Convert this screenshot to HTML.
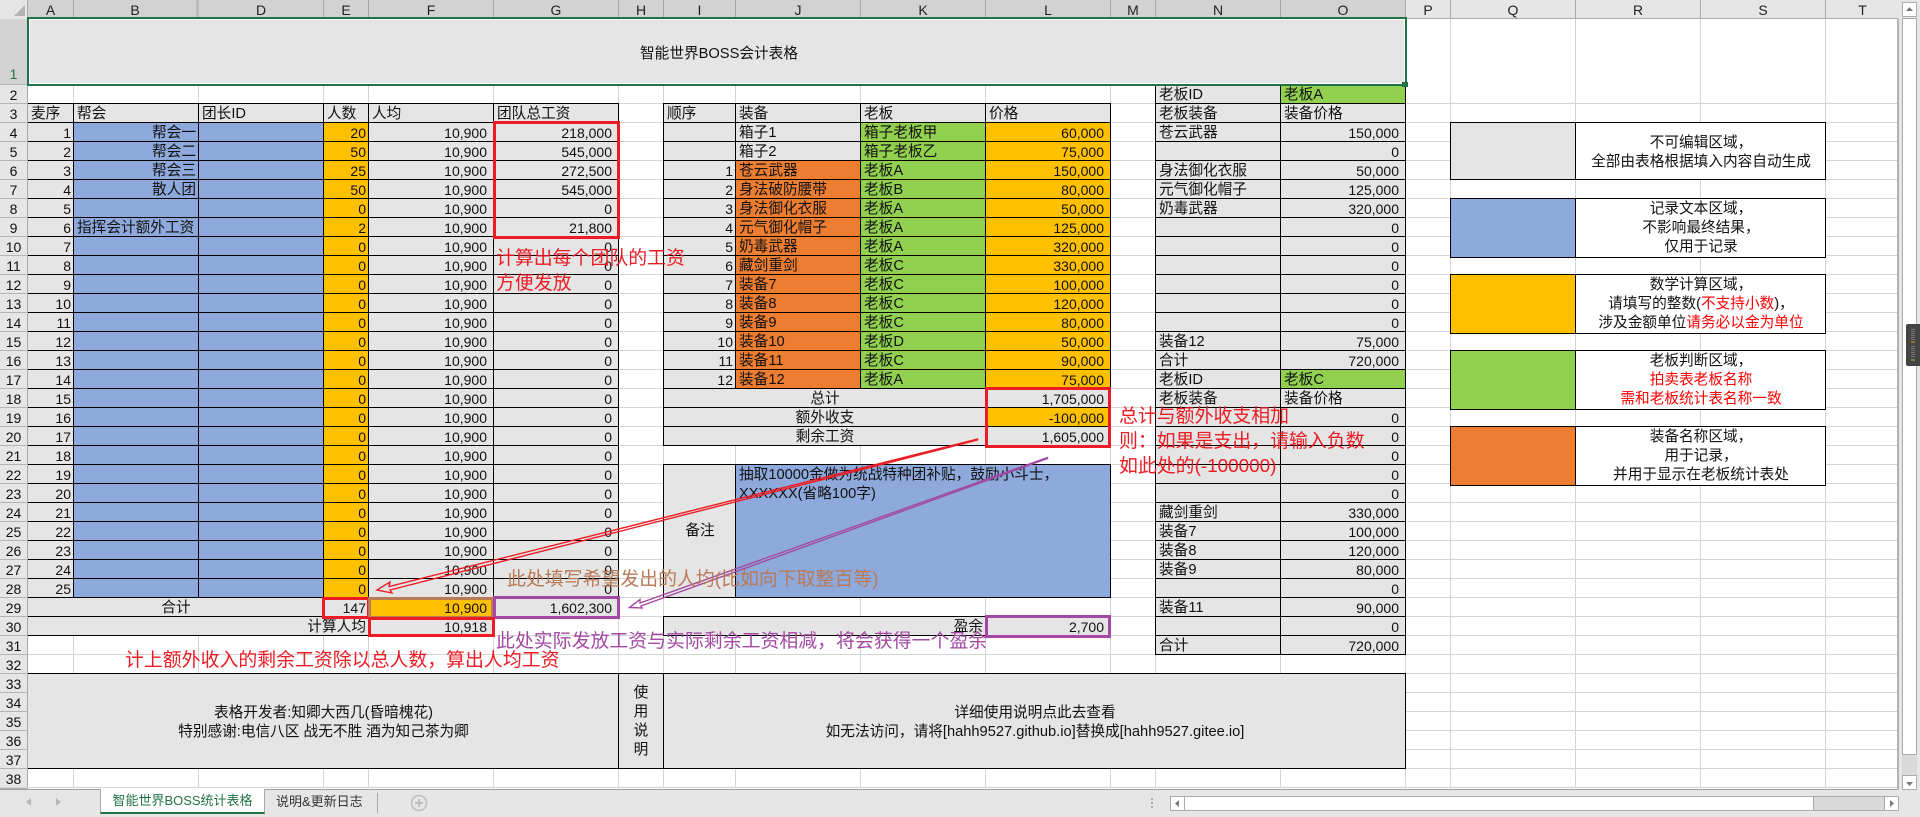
<!DOCTYPE html>
<html lang="zh-CN"><head><meta charset="utf-8"><title>智能世界BOSS会计表格</title>
<style>
html,body{margin:0;padding:0;width:1920px;height:817px;overflow:hidden;background:#fff}
body{position:relative;font:14.67px "Liberation Sans","Noto Sans CJK SC",sans-serif;color:#111}
.a{position:absolute}
table{position:absolute;border-collapse:separate;border-spacing:0;table-layout:fixed;border-top:1px solid #000;border-left:1px solid #000}
table.nl{border-left:0}
td{box-sizing:border-box;height:19px;padding:3px 2px 0 3px;line-height:15px;border-right:1px solid #000;border-bottom:1px solid #000;background:#e5e5e5;white-space:nowrap;overflow:hidden;text-align:left}
td.b{background:#8ea9db}td.y{background:#ffc000}td.e{background:#92d050}td.o{background:#ed7d31}td.w{background:#fff}
td.r{text-align:right}td.c{text-align:center}
td.n{text-align:right;font-size:14px;padding-right:6px}
td.m{text-align:right;font-size:14px}
td.x{background:none;border:0}
.red{color:#f00}
.ann{position:absolute;font-size:18.9px;line-height:25px;white-space:nowrap}
.box{position:absolute;box-sizing:border-box;border:3px solid #ed1c24}
#ch{position:absolute;left:0;top:0;width:1920px;height:19px;background:#e6e6e6}
#ch div{position:absolute;top:0;height:18px;line-height:20px;text-align:center;font-size:14px;box-sizing:border-box;border-right:1px solid #a8a8a8;color:#222;overflow:hidden}
#ch .s{background:#d2d2d2;border-bottom:0}
#rh{position:absolute;left:0;top:19px;width:28px}
#rh div{box-sizing:border-box;height:19px;line-height:21px;text-align:center;font-size:14px;background:#e6e6e6;border-bottom:1px solid #b4b4b4;border-right:1px solid #a8a8a8;color:#111}
</style></head><body>
<svg class="a" style="left:0;top:0" width="1920" height="817" shape-rendering="crispEdges"><path stroke="#d4d4d4" fill="none" d="M73.5 19V788M198.5 19V788M323.5 19V788M368.5 19V788M493.5 19V788M618.5 19V788M663.5 19V788M735.5 19V788M860.5 19V788M985.5 19V788M1110.5 19V788M1155.5 19V788M1280.5 19V788M1405.5 19V788M1450.5 19V788M1575.5 19V788M1700.5 19V788M1825.5 19V788"/></svg>
<div class="a" style="left:28px;top:85px;width:1870px;height:703px;background:repeating-linear-gradient(to bottom,transparent 0,transparent 18px,#d4d4d4 18px,#d4d4d4 19px)"></div>

<!-- column headers -->
<div id="ch">
<div style="left:0;width:28px"></div>
<div class="s" style="left:28px;width:46px">A</div><div class="s" style="left:74px;width:125px;border-right:3px solid #bdbdbd">B</div><div class="s" style="left:199px;width:125px">D</div><div class="s" style="left:324px;width:45px">E</div><div class="s" style="left:369px;width:125px">F</div><div class="s" style="left:494px;width:125px">G</div><div class="s" style="left:619px;width:45px">H</div><div class="s" style="left:664px;width:72px">I</div><div class="s" style="left:736px;width:125px">J</div><div class="s" style="left:861px;width:125px">K</div><div class="s" style="left:986px;width:125px">L</div><div class="s" style="left:1111px;width:45px">M</div><div class="s" style="left:1156px;width:125px">N</div><div class="s" style="left:1281px;width:125px">O</div>
<div style="left:1406px;width:45px">P</div><div style="left:1451px;width:125px">Q</div><div style="left:1576px;width:125px">R</div><div style="left:1701px;width:125px">S</div><div style="left:1826px;width:73px;border-right:0">T</div>
</div>
<div class="a" style="left:1406px;top:18px;width:492px;height:1px;background:#a8a8a8"></div>
<svg class="a" style="left:14px;top:5px" width="12" height="11"><path d="M11 0V11H0Z" fill="#b4b4b4"/></svg>

<!-- row headers -->
<div id="rh">
<div style="height:66px;line-height:110px;background:#d2d2d2;color:#217346">1</div>
<div>2</div><div>3</div><div>4</div><div>5</div><div>6</div><div>7</div><div>8</div><div>9</div><div>10</div><div>11</div><div>12</div><div>13</div><div>14</div><div>15</div><div>16</div><div>17</div><div>18</div><div>19</div><div>20</div><div>21</div><div>22</div><div>23</div><div>24</div><div>25</div><div>26</div><div>27</div><div>28</div><div>29</div><div>30</div><div>31</div><div>32</div><div>33</div><div>34</div><div>35</div><div>36</div><div>37</div><div style="height:20px">38</div>
</div>

<!-- title -->
<div class="a" style="left:30px;top:21px;width:1378px;height:66px;text-align:center;line-height:66px;z-index:1">智能世界BOSS会计表格</div>
<div class="a" style="left:28px;top:19px;width:1378px;height:66px;background:#e5e5e5"></div>

<!-- left table -->
<table class="nl" style="left:28px;top:103px;width:591px">
<colgroup><col style="width:46px"><col style="width:125px"><col style="width:125px"><col style="width:45px"><col style="width:125px"><col style="width:125px"></colgroup>
<tr><td>麦序</td><td>帮会</td><td>团长ID</td><td>人数</td><td>人均</td><td>团队总工资</td></tr>
<tr><td class="m">1</td><td class="b r">帮会一</td><td class="b"></td><td class="y m">20</td><td class="n">10,900</td><td class="n">218,000</td></tr>
<tr><td class="m">2</td><td class="b r">帮会二</td><td class="b"></td><td class="y m">50</td><td class="n">10,900</td><td class="n">545,000</td></tr>
<tr><td class="m">3</td><td class="b r">帮会三</td><td class="b"></td><td class="y m">25</td><td class="n">10,900</td><td class="n">272,500</td></tr>
<tr><td class="m">4</td><td class="b r">散人团</td><td class="b"></td><td class="y m">50</td><td class="n">10,900</td><td class="n">545,000</td></tr>
<tr><td class="m">5</td><td class="b r"></td><td class="b"></td><td class="y m">0</td><td class="n">10,900</td><td class="n">0</td></tr>
<tr><td class="m">6</td><td class="b">指挥会计额外工资</td><td class="b"></td><td class="y m">2</td><td class="n">10,900</td><td class="n">21,800</td></tr>
<tr><td class="m">7</td><td class="b"></td><td class="b"></td><td class="y m">0</td><td class="n">10,900</td><td class="n">0</td></tr>
<tr><td class="m">8</td><td class="b"></td><td class="b"></td><td class="y m">0</td><td class="n">10,900</td><td class="n">0</td></tr>
<tr><td class="m">9</td><td class="b"></td><td class="b"></td><td class="y m">0</td><td class="n">10,900</td><td class="n">0</td></tr>
<tr><td class="m">10</td><td class="b"></td><td class="b"></td><td class="y m">0</td><td class="n">10,900</td><td class="n">0</td></tr>
<tr><td class="m">11</td><td class="b"></td><td class="b"></td><td class="y m">0</td><td class="n">10,900</td><td class="n">0</td></tr>
<tr><td class="m">12</td><td class="b"></td><td class="b"></td><td class="y m">0</td><td class="n">10,900</td><td class="n">0</td></tr>
<tr><td class="m">13</td><td class="b"></td><td class="b"></td><td class="y m">0</td><td class="n">10,900</td><td class="n">0</td></tr>
<tr><td class="m">14</td><td class="b"></td><td class="b"></td><td class="y m">0</td><td class="n">10,900</td><td class="n">0</td></tr>
<tr><td class="m">15</td><td class="b"></td><td class="b"></td><td class="y m">0</td><td class="n">10,900</td><td class="n">0</td></tr>
<tr><td class="m">16</td><td class="b"></td><td class="b"></td><td class="y m">0</td><td class="n">10,900</td><td class="n">0</td></tr>
<tr><td class="m">17</td><td class="b"></td><td class="b"></td><td class="y m">0</td><td class="n">10,900</td><td class="n">0</td></tr>
<tr><td class="m">18</td><td class="b"></td><td class="b"></td><td class="y m">0</td><td class="n">10,900</td><td class="n">0</td></tr>
<tr><td class="m">19</td><td class="b"></td><td class="b"></td><td class="y m">0</td><td class="n">10,900</td><td class="n">0</td></tr>
<tr><td class="m">20</td><td class="b"></td><td class="b"></td><td class="y m">0</td><td class="n">10,900</td><td class="n">0</td></tr>
<tr><td class="m">21</td><td class="b"></td><td class="b"></td><td class="y m">0</td><td class="n">10,900</td><td class="n">0</td></tr>
<tr><td class="m">22</td><td class="b"></td><td class="b"></td><td class="y m">0</td><td class="n">10,900</td><td class="n">0</td></tr>
<tr><td class="m">23</td><td class="b"></td><td class="b"></td><td class="y m">0</td><td class="n">10,900</td><td class="n">0</td></tr>
<tr><td class="m">24</td><td class="b"></td><td class="b"></td><td class="y m">0</td><td class="n">10,900</td><td class="n">0</td></tr>
<tr><td class="m">25</td><td class="b"></td><td class="b"></td><td class="y m">0</td><td class="n">10,900</td><td class="n">0</td></tr>
<tr><td class="c" colspan="3">合计</td><td class="m">147</td><td class="y n">10,900</td><td class="n">1,602,300</td></tr>
<tr><td class="r" colspan="4">计算人均</td><td class="n">10,918</td><td class="x"></td></tr>
</table>

<!-- mid table -->
<table style="left:663px;top:103px;width:448px">
<colgroup><col style="width:72px"><col style="width:125px"><col style="width:125px"><col style="width:125px"></colgroup>
<tr><td>顺序</td><td>装备</td><td>老板</td><td>价格</td></tr>
<tr><td></td><td>箱子1</td><td class="e">箱子老板甲</td><td class="y n">60,000</td></tr>
<tr><td></td><td>箱子2</td><td class="e">箱子老板乙</td><td class="y n">75,000</td></tr>
<tr><td class="m">1</td><td class="o">苍云武器</td><td class="e">老板A</td><td class="y n">150,000</td></tr>
<tr><td class="m">2</td><td class="o">身法破防腰带</td><td class="e">老板B</td><td class="y n">80,000</td></tr>
<tr><td class="m">3</td><td class="o">身法御化衣服</td><td class="e">老板A</td><td class="y n">50,000</td></tr>
<tr><td class="m">4</td><td class="o">元气御化帽子</td><td class="e">老板A</td><td class="y n">125,000</td></tr>
<tr><td class="m">5</td><td class="o">奶毒武器</td><td class="e">老板A</td><td class="y n">320,000</td></tr>
<tr><td class="m">6</td><td class="o">藏剑重剑</td><td class="e">老板C</td><td class="y n">330,000</td></tr>
<tr><td class="m">7</td><td class="o">装备7</td><td class="e">老板C</td><td class="y n">100,000</td></tr>
<tr><td class="m">8</td><td class="o">装备8</td><td class="e">老板C</td><td class="y n">120,000</td></tr>
<tr><td class="m">9</td><td class="o">装备9</td><td class="e">老板C</td><td class="y n">80,000</td></tr>
<tr><td class="m">10</td><td class="o">装备10</td><td class="e">老板D</td><td class="y n">50,000</td></tr>
<tr><td class="m">11</td><td class="o">装备11</td><td class="e">老板C</td><td class="y n">90,000</td></tr>
<tr><td class="m">12</td><td class="o">装备12</td><td class="e">老板A</td><td class="y n">75,000</td></tr>
<tr><td class="c" colspan="3">总计</td><td class="n">1,705,000</td></tr>
<tr><td class="c" colspan="3">额外收支</td><td class="y n">-100,000</td></tr>
<tr><td class="c" colspan="3">剩余工资</td><td class="n">1,605,000</td></tr>
</table>

<!-- notes -->
<table style="left:663px;top:464px;width:448px">
<colgroup><col style="width:72px"><col style="width:375px"></colgroup>
<tr><td class="c" style="height:133px;line-height:17px;padding-top:1px">备注</td><td class="b" style="height:133px;vertical-align:top;line-height:19px;padding-top:1px;white-space:normal">抽取10000金做为统战特种团补贴，鼓励小斗士，<br>XXXXXX(省略100字)</td></tr>
</table>
<table style="left:663px;top:616px;width:448px">
<colgroup><col style="width:322px"><col style="width:125px"></colgroup>
<tr><td class="r">盈余</td><td class="n">2,700</td></tr>
</table>

<!-- right table -->
<table style="left:1155px;top:84px;width:251px">
<colgroup><col style="width:125px"><col style="width:125px"></colgroup>
<tr><td>老板ID</td><td class="e">老板A</td></tr>
<tr><td>老板装备</td><td>装备价格</td></tr>
<tr><td>苍云武器</td><td class="n">150,000</td></tr>
<tr><td></td><td class="n">0</td></tr>
<tr><td>身法御化衣服</td><td class="n">50,000</td></tr>
<tr><td>元气御化帽子</td><td class="n">125,000</td></tr>
<tr><td>奶毒武器</td><td class="n">320,000</td></tr>
<tr><td></td><td class="n">0</td></tr>
<tr><td></td><td class="n">0</td></tr>
<tr><td></td><td class="n">0</td></tr>
<tr><td></td><td class="n">0</td></tr>
<tr><td></td><td class="n">0</td></tr>
<tr><td></td><td class="n">0</td></tr>
<tr><td>装备12</td><td class="n">75,000</td></tr>
<tr><td>合计</td><td class="n">720,000</td></tr>
<tr><td>老板ID</td><td class="e">老板C</td></tr>
<tr><td>老板装备</td><td>装备价格</td></tr>
<tr><td></td><td class="n">0</td></tr>
<tr><td></td><td class="n">0</td></tr>
<tr><td></td><td class="n">0</td></tr>
<tr><td></td><td class="n">0</td></tr>
<tr><td></td><td class="n">0</td></tr>
<tr><td>藏剑重剑</td><td class="n">330,000</td></tr>
<tr><td>装备7</td><td class="n">100,000</td></tr>
<tr><td>装备8</td><td class="n">120,000</td></tr>
<tr><td>装备9</td><td class="n">80,000</td></tr>
<tr><td></td><td class="n">0</td></tr>
<tr><td>装备11</td><td class="n">90,000</td></tr>
<tr><td></td><td class="n">0</td></tr>
<tr><td>合计</td><td class="n">720,000</td></tr>
</table>

<!-- footer blocks -->
<table class="nl" style="left:28px;top:673px;width:1378px">
<colgroup><col style="width:591px"><col style="width:45px"><col style="width:742px"></colgroup>
<tr>
<td class="c" style="height:95px;line-height:19px;padding-top:3px">表格开发者:知卿大西几(昏暗槐花)<br>特别感谢:电信八区 战无不胜 酒为知己茶为卿</td>
<td class="c" style="height:95px;line-height:19px;padding:1px 0 0 0">使<br>用<br>说<br>明</td>
<td class="c" style="height:95px;line-height:19px;padding-top:3px">详细使用说明点此去查看<br>如无法访问，请将[hahh9527.github.io]替换成[hahh9527.gitee.io]</td>
</tr></table>

<!-- legend -->
<table style="left:1450px;top:122px;width:376px"><colgroup><col style="width:125px"><col style="width:250px"></colgroup><tr><td style="height:57px"></td><td class="w c" style="height:57px;line-height:19px;padding-top:3px">不可编辑区域，<br>全部由表格根据填入内容自动生成</td></tr></table>
<table style="left:1450px;top:198px;width:376px"><colgroup><col style="width:125px"><col style="width:250px"></colgroup><tr><td class="b" style="height:57px"></td><td class="w c" style="height:57px;line-height:19px;padding-top:1px">记录文本区域，<br>不影响最终结果，<br>仅用于记录</td></tr></table>
<table style="left:1450px;top:274px;width:376px"><colgroup><col style="width:125px"><col style="width:250px"></colgroup><tr><td class="y" style="height:57px"></td><td class="w c" style="height:57px;line-height:19px;padding-top:1px">数学计算区域，<br>请填写的整数(<span class="red">不支持小数</span>)，<br>涉及金额单位<span class="red">请务必以金为单位</span></td></tr></table>
<table style="left:1450px;top:350px;width:376px"><colgroup><col style="width:125px"><col style="width:250px"></colgroup><tr><td class="e" style="height:57px"></td><td class="w c" style="height:57px;line-height:19px;padding-top:1px">老板判断区域，<br><span class="red">拍卖表老板名称</span><br><span class="red">需和老板统计表名称一致</span></td></tr></table>
<table style="left:1450px;top:426px;width:376px"><colgroup><col style="width:125px"><col style="width:250px"></colgroup><tr><td class="o" style="height:57px"></td><td class="w c" style="height:57px;line-height:19px;padding-top:1px">装备名称区域，<br>用于记录，<br>并用于显示在老板统计表处</td></tr></table>

<!-- selection -->
<div class="a" style="left:27px;top:17px;width:1376px;height:65px;border:2px solid #217346;box-shadow:inset 0 0 0 1px #fff;background:none"></div>
<div class="a" style="left:1402px;top:82px;width:6px;height:5px;background:#217346"></div>

<!-- annotation boxes -->
<div class="box" style="left:493px;top:121px;width:127px;height:118px"></div>
<div class="box" style="left:322px;top:597px;width:48px;height:22px"></div>
<div class="box" style="left:368px;top:597px;width:126px;height:22px;border-color:#b97a57"></div>
<div class="box" style="left:493px;top:596px;width:127px;height:23px;border-color:#a349a4"></div>
<div class="box" style="left:368px;top:617px;width:127px;height:20px"></div>
<div class="box" style="left:985px;top:387px;width:126px;height:61px"></div>
<div class="box" style="left:985px;top:615px;width:126px;height:23px;border-color:#a349a4"></div>

<!-- arrows -->
<svg class="a" style="left:0;top:0" width="1920" height="817" fill="none" stroke-width="1.4">
<path stroke="#ed1c24" stroke-linejoin="miter" d="M977.5 439 L389 586.5 L390 582 L377 590 L392 593 L390 590 L977.5 440Z"/>
<path stroke="#a349a4" d="M1047.5 457.5 L640 603 L640 599.5 L629.5 607.5 L642 608 L641 606 L1047.5 458.5Z"/>
</svg>

<!-- annotation text -->
<div class="ann" style="left:496px;top:246px;color:#ed1c24">计算出每个团队的工资<br>方便发放</div>
<div class="ann" style="left:125px;top:648px;color:#ed1c24">计上额外收入的剩余工资除以总人数，算出人均工资</div>
<div class="ann" style="left:507px;top:567px;color:#b97a57">此处填写希望发出的人均(比如向下取整百等)</div>
<div class="ann" style="left:496px;top:629px;color:#a349a4">此处实际发放工资与实际剩余工资相减，将会获得一个盈余</div>
<div class="ann" style="left:1119px;top:404px;color:#ed1c24">总计与额外收支相加<br>则：如果是支出，请输入负数<br>如此处的(-100000)</div>

<!-- bottom bar -->
<div class="a" style="left:0;top:787px;width:1899px;height:1px;background:#d4d4d4"></div>
<div class="a" style="left:0;top:789px;width:1920px;height:28px;background:#e6e6e6;border-top:1px solid #9e9e9e;box-sizing:border-box"></div>
<svg class="a" style="left:0;top:789px" width="460" height="28">
<path d="M31 9V17L26 13Z" fill="#b8b8b8"/><path d="M56 9V17L61 13Z" fill="#b8b8b8"/>
<path d="M377.5 4V24" stroke="#a8a8a8"/>
<circle cx="419" cy="14" r="7.5" fill="none" stroke="#bdbdbd" stroke-width="1.5"/><path d="M415 14H423M419 10V18" stroke="#bdbdbd" stroke-width="2"/>
</svg>
<div class="a" style="left:100px;top:789px;width:165px;height:25px;box-sizing:border-box;background:#fff;border-left:1px solid #a8a8a8;border-right:1px solid #a8a8a8;border-bottom:2px solid #217346;color:#217346;font-size:13px;line-height:24px;text-align:center;white-space:nowrap">智能世界BOSS统计表格</div>
<div class="a" style="left:276px;top:789px;font-size:13px;line-height:25px;color:#333;white-space:nowrap">说明&amp;更新日志</div>
<svg class="a" style="left:1150px;top:796px" width="6" height="14"><path d="M2 2V4M2 6V8M2 10V12" stroke="#aaa" stroke-width="2"/></svg>

<!-- horizontal scrollbar -->
<div class="a" style="left:1170px;top:796px;width:729px;height:15px;box-sizing:border-box;background:#d9d9d9;border:1px solid #ababab"></div>
<div class="a" style="left:1170px;top:796px;width:15px;height:15px;box-sizing:border-box;background:#fff;border:1px solid #ababab"></div>
<div class="a" style="left:1185px;top:796px;width:629px;height:15px;box-sizing:border-box;background:#fff;border:1px solid #ababab;border-left:0"></div>
<div class="a" style="left:1884px;top:796px;width:15px;height:15px;box-sizing:border-box;background:#fff;border:1px solid #ababab"></div>
<svg class="a" style="left:1170px;top:796px" width="729" height="15"><path d="M9 4V11L5 7.5Z" fill="#777"/><path d="M720 4V11L724 7.5Z" fill="#777"/></svg>

<!-- vertical scrollbar -->
<div class="a" style="left:1897px;top:19px;width:2px;height:771px;background:#b4b4b4"></div>
<div class="a" style="left:1899px;top:0;width:21px;height:790px;background:#e6e6e6"></div>
<div class="a" style="left:1902px;top:755px;width:15px;height:20px;background:#d9d9d9"></div>
<div class="a" style="left:1902px;top:2px;width:15px;height:15px;box-sizing:border-box;background:#fff;border:1px solid #ababab"></div>
<div class="a" style="left:1902px;top:18px;width:15px;height:737px;box-sizing:border-box;background:#fff;border:1px solid #ababab"></div>
<div class="a" style="left:1902px;top:775px;width:15px;height:15px;box-sizing:border-box;background:#fff;border:1px solid #ababab"></div>
<svg class="a" style="left:1902px;top:2px" width="15" height="788"><path d="M4 9H11L7.5 5Z" fill="#777"/><path d="M4 780H11L7.5 784Z" fill="#777"/></svg>

<!-- overlay widget -->
<svg class="a" style="left:1906px;top:324px" width="14" height="42">
<path d="M2 0H14V42H2Q0 42 0 40V2Q0 0 2 0Z" fill="#444"/>
<path d="M5 5.5H9M5 7.5H9M5 9.5H9M5 11.5H9M5 13.5H9M5 15.5H9M5 22.5H9M5 24.5H9M5 26.5H9M5 28.5H9M5 30.5H9M5 32.5H9" stroke="#777"/>
<path d="M5 18H9" stroke="#f5a623"/><path d="M5 36H9" stroke="#7fe030"/>
</svg>
</body></html>
